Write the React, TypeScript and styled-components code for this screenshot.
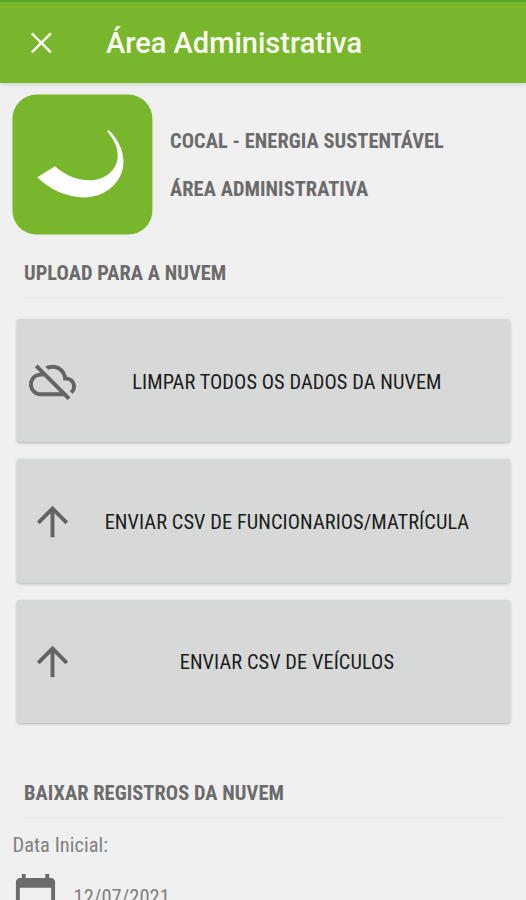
import React from "react";
import styled, { createGlobalStyle } from "styled-components";

const GlobalStyle = createGlobalStyle`
  html, body { margin: 0; height: 900px; overflow: hidden; background: #f0f0f0; }
  * { box-sizing: border-box; }
`;

const Screen = styled.div`
  width: 526px;
  height: 900px;
  overflow: hidden;
  display: flex;
  flex-direction: column;
  background: #f0f0f0;
  font-family: "Roboto Condensed", Roboto, sans-serif;
  font-stretch: 75%;
  font-size: 20.4px;
  letter-spacing: 0.06px;
  line-height: 24px;
  color: #6b6b6b;
`;

const AppBar = styled.header`
  flex: none;
  height: 83px;
  display: flex;
  align-items: center;
  gap: 52px;
  padding: 0 0 0 28px;
  background: #78b62b;
  border-top: 2px solid #55a52e;
  box-shadow: 0 1px 5px rgba(0, 0, 0, 0.16);
`;

const Title = styled.h1`
  margin: 0;
  font: 500 29px/36px Roboto, sans-serif;
  font-stretch: 100%;
  letter-spacing: 0;
  color: #fafdf3;
`;

const Icon = styled.svg<{ $size: number }>`
  display: block;
  flex: none;
  width: ${(p) => p.$size}px;
  height: ${(p) => p.$size}px;
`;

const Brand = styled.section`
  flex: none;
  display: flex;
  gap: 17px;
  padding: 11px 12px 0;
`;

const BrandText = styled.div`
  display: flex;
  flex-direction: column;
  gap: 24px;
  padding-top: 35px;
`;

const Label = styled.span<{ $bold?: boolean }>`
  white-space: nowrap;
  font-weight: ${(p) => (p.$bold ? 700 : 400)};
`;

const SectionTitle = styled.h2<{ $top: number }>`
  flex: none;
  margin: ${(p) => p.$top}px 20px 0 24px;
  height: 38px;
  border-bottom: 2px solid #ebebeb;
  font: inherit;
`;

const Actions = styled.div`
  flex: none;
  display: flex;
  flex-direction: column;
  gap: 17px;
  padding: 20px 16px 0 17px;
`;

const ActionButton = styled.button`
  height: 123.4px;
  display: flex;
  align-items: center;
  padding: 0 12px 0 12.4px;
  border: 0;
  border-radius: 3px;
  background: #d6d9d7;
  box-shadow: 0 1px 3px rgba(0, 0, 0, 0.26);
  font: inherit;
  letter-spacing: 0.06px;
  color: #1c1c1c;
`;

const ActionText = styled.span`
  flex: 1;
  padding: 2px 0.6px 0 0;
  text-align: center;
`;

const FieldLabel = styled.div`
  padding: 14px 0 0 12.5px;
  color: #808080;
`;

const DateRow = styled.div`
  display: flex;
  align-items: flex-start;
  gap: 14.6px;
  padding: 15px 0 0 12px;
  color: #808080;
`;

const DateValue = styled.div`
  padding-top: 13px;
`;

const arrow = "M4 12l1.41 1.41L11 7.83V20h2V7.83l5.58 5.59L20 12l-8-8-8 8z";
const cloudOff =
  "M24 15c0-2.64-2.05-4.78-4.65-4.96C18.67 6.59 15.64 4 12 4c-1.33 0-2.57.36-3.65.97l1.49 1.49C10.51 6.17 11.23 6 12 6c3.04 0 5.5 2.46 5.5 5.5v.5H19c1.66 0 3 1.34 3 3 0 .99-.48 1.85-1.21 2.4l1.41 1.41c1.09-.92 1.8-2.27 1.8-3.81zM4.41 3.86L3 5.27l2.77 2.77h-.42C2.34 8.36 0 10.91 0 14c0 3.31 2.69 6 6 6h11.73l2 2 1.41-1.41L4.41 3.86zM6 18c-2.21 0-4-1.79-4-4s1.79-4 4-4h1.73l8 8H6z";

const actions = [
  { text: "LIMPAR TODOS OS DADOS DA NUVEM", path: cloudOff },
  { text: "ENVIAR CSV DE FUNCIONARIOS/MATRÍCULA", path: arrow },
  { text: "ENVIAR CSV DE VEÍCULOS", path: arrow },
];

export default function App() {
  return (
    <Screen>
      <GlobalStyle />
      <AppBar>
        <Icon $size={26} viewBox="0 0 26 26">
          <path d="M3.8 3.3L22.8 22.3M22.8 3.3L3.8 22.3" stroke="#fafdf3" strokeWidth="2.5" />
        </Icon>
        <Title>Área Administrativa</Title>
      </AppBar>
      <Brand>
        <Icon $size={141} viewBox="0 0 141 141">
          <rect x="0.4" y="0.6" width="140" height="140" rx="24" fill="#78b62b" />
          <path
            d="M97 36.2C107 46 112.5 59 111.4 71C109 91 91 103.4 72 103.4C54 103.4 37 95 25.3 83.3L43 72.3C54 82 66 86.3 78 86.3C93 86 104 77 105.6 64C106.5 54 102 45.5 95 37.2Z"
            fill="#fff"
          />
        </Icon>
        <BrandText>
          <Label $bold>COCAL - ENERGIA SUSTENTÁVEL</Label>
          <Label $bold>ÁREA ADMINISTRATIVA</Label>
        </BrandText>
      </Brand>
      <SectionTitle $top={26}>
        <Label $bold>UPLOAD PARA A NUVEM</Label>
      </SectionTitle>
      <Actions>
        {actions.map((a) => (
          <ActionButton key={a.text}>
            <Icon $size={47} viewBox="0 0 24 24">
              <path d={a.path} fill="#636565" />
            </Icon>
            <ActionText>
              <Label>{a.text}</Label>
            </ActionText>
          </ActionButton>
        ))}
      </Actions>
      <SectionTitle $top={58}>
        <Label $bold>BAIXAR REGISTROS DA NUVEM</Label>
      </SectionTitle>
      <FieldLabel>
        <Label>Data Inicial:</Label>
      </FieldLabel>
      <DateRow>
        <Icon $size={47} viewBox="0 0 24 24">
          <path
            d="M20 3h-1V1h-2v2H7V1H5v2H4c-1.1 0-2 .9-2 2v16c0 1.1.9 2 2 2h16c1.1 0 2-.9 2-2V5c0-1.1-.9-2-2-2zm0 18H4V8h16v13z"
            fill="#6b6b6b"
          />
        </Icon>
        <DateValue>
          <Label>12/07/2021</Label>
        </DateValue>
      </DateRow>
    </Screen>
  );
}
